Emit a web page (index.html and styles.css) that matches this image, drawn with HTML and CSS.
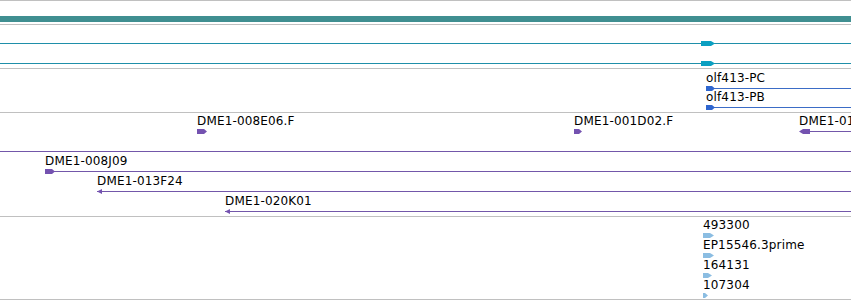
FILE: index.html
```html
<!DOCTYPE html>
<html lang="en">
<head>
  <meta charset="UTF-8">
  <title>Detail view</title>
  <link rel="stylesheet" href="styles.css">
</head>
<body>
  <div class="panel">

    <!-- ruler / scale -->
    <div class="track track-scale">
      <div class="scale-bar"></div>
    </div>

    <!-- transcript models (no labels) -->
    <div class="track track-rows">
      <div class="row">
        <svg class="glyph" viewBox="0 0 851 7">
          <rect class="ln teal" x="0" y="3" width="851" height="1"/>
          <polygon class="box teal-box" points="701,1 711,1 715,3.5 711,6 701,6"/>
        </svg>
      </div>
      <div class="row">
        <svg class="glyph" viewBox="0 0 851 7">
          <rect class="ln teal" x="0" y="3" width="851" height="1"/>
          <polygon class="box teal-box" points="701,1 711,1 715,3.5 711,6 701,6"/>
        </svg>
      </div>
    </div>

    <!-- genes -->
    <div class="track track-genes">
      <div class="row row-tight">
        <span class="label" style="left:706px">olf413-PC</span>
        <svg class="glyph" viewBox="0 0 851 7">
          <rect class="ln blue" x="706" y="3" width="145" height="1"/>
          <polygon class="box blue-box" points="706,1 712,1 715,3.5 712,6 706,6"/>
        </svg>
      </div>
      <div class="row row-tight">
        <span class="label" style="left:706px">olf413-PB</span>
        <svg class="glyph" viewBox="0 0 851 7">
          <rect class="ln blue" x="706" y="3" width="145" height="1"/>
          <polygon class="box blue-box" points="706,1 712,1 715,3.5 712,6 706,6"/>
        </svg>
      </div>
    </div>

    <!-- BAC clones -->
    <div class="track track-rows">
      <div class="row">
        <span class="label" style="left:197px">DME1-008E06.F</span>
        <span class="label" style="left:574px">DME1-001D02.F</span>
        <span class="label" style="left:799px">DME1-011J03.F</span>
        <svg class="glyph" viewBox="0 0 851 7">
          <polygon class="box purple-box" points="197,1 204,1 207,3.5 204,6 197,6"/>
          <polygon class="box purple-box" points="574,1 579,1 582,3.5 579,6 574,6"/>
          <rect class="ln purple" x="806" y="3" width="45" height="1"/>
          <polygon class="box purple-box" points="799,3.5 803,1 810,1 810,6 803,6"/>
        </svg>
      </div>
      <div class="row">
        <svg class="glyph" viewBox="0 0 851 7">
          <rect class="ln purple" x="0" y="3" width="851" height="1"/>
        </svg>
      </div>
      <div class="row">
        <span class="label" style="left:45px">DME1-008J09</span>
        <svg class="glyph" viewBox="0 0 851 7">
          <rect class="ln purple" x="45" y="3" width="806" height="1"/>
          <polygon class="box purple-box" points="45,1 52,1 55,3.5 52,6 45,6"/>
        </svg>
      </div>
      <div class="row">
        <span class="label" style="left:97px">DME1-013F24</span>
        <svg class="glyph" viewBox="0 0 851 7">
          <rect class="ln purple" x="97" y="3" width="754" height="1"/>
          <polygon class="box purple-box" points="97,3.5 102,1 102,6"/>
        </svg>
      </div>
      <div class="row">
        <span class="label" style="left:225px">DME1-020K01</span>
        <svg class="glyph" viewBox="0 0 851 7">
          <rect class="ln purple" x="225" y="3" width="626" height="1"/>
          <polygon class="box purple-box" points="225,3.5 230,1 230,6"/>
        </svg>
      </div>
    </div>

    <!-- ESTs -->
    <div class="track track-est">
      <div class="row">
        <span class="label" style="left:703px">493300</span>
        <svg class="glyph" viewBox="0 0 851 7">
          <polygon class="box est-box" points="703,1 710,1 714,3.5 710,6 703,6"/>
        </svg>
      </div>
      <div class="row">
        <span class="label" style="left:703px">EP15546.3prime</span>
        <svg class="glyph" viewBox="0 0 851 7">
          <polygon class="box est-box" points="703,1 710,1 714,3.5 710,6 703,6"/>
        </svg>
      </div>
      <div class="row">
        <span class="label" style="left:703px">164131</span>
        <svg class="glyph" viewBox="0 0 851 7">
          <polygon class="box est-box" points="703,1 708,1 712,3.5 708,6 703,6"/>
        </svg>
      </div>
      <div class="row">
        <span class="label" style="left:703px">107304</span>
        <svg class="glyph" viewBox="0 0 851 7">
          <polygon class="box est-box" points="703,1 705,1 708,3.5 705,6 703,6"/>
        </svg>
      </div>
    </div>

  </div>
</body>
</html>
```

FILE: styles.css
```css
html, body {
  margin: 0;
  padding: 0;
  overflow: hidden;
  background: #fff;
}

body {
  font-family: "DejaVu Sans", sans-serif;
  font-size: 12px;
  color: #000;
}

.panel {
  width: 851px;
  border-top: 1px solid #c0c0c0;
}

.track {
  border-bottom: 1px solid #c0c0c0;
}

.track-scale {
  height: 8px;
  padding-top: 15px;
}

.scale-bar {
  height: 6px;
  background-color: #408f91;
}

.track-rows {
  padding-bottom: 3px;
}

.track-genes {
  padding-top: 1px;
  padding-bottom: 4px;
}

.track-est {
  padding-bottom: 2px;
}

.row {
  position: relative;
  height: 20px;
}

.row-tight {
  height: 19px;
}

.label {
  position: absolute;
  top: 1px;
  line-height: 14px;
  letter-spacing: 0.15px;
  white-space: nowrap;
}

.glyph {
  position: absolute;
  left: 0;
  top: 15px;
  width: 851px;
  height: 7px;
  display: block;
}

.ln.teal { fill: #1f8fa9; }
.teal-box { fill: #0b9fc1; }

.ln.blue { fill: #3b6cc6; }
.blue-box { fill: #2f66cf; }

.ln.purple { fill: #7357aa; }
.purple-box { fill: #7452b0; }

.est-box { fill: #8bbde2; }
```
